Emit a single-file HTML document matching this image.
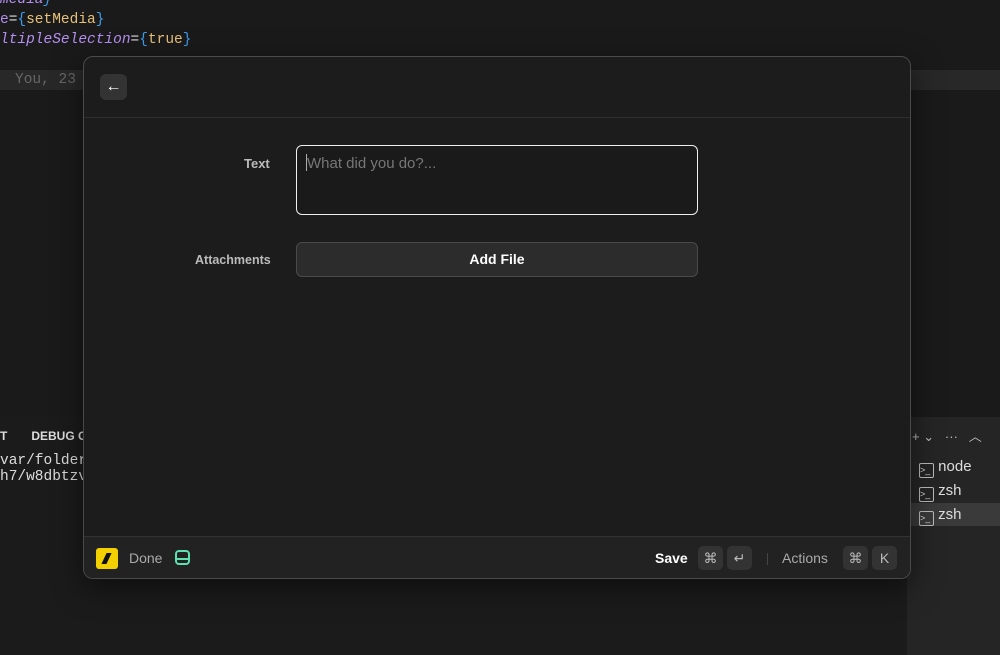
<!DOCTYPE html>
<html><head><meta charset="utf-8"><style>
*{margin:0;padding:0;box-sizing:border-box}
body{width:1000px;height:655px;background:#1a1a1a;position:relative;overflow:hidden;font-family:"Liberation Sans",sans-serif}
.code{position:absolute;left:0;font-family:"Liberation Mono",monospace;font-size:14.5px;color:#b48ef0;white-space:pre}
.a{position:absolute}
.modal{position:absolute;left:83px;top:56px;width:828px;height:523px;background:#1c1c1c;border:1px solid #4a4a4a;border-radius:10px;overflow:hidden;box-shadow:0 8px 30px rgba(0,0,0,.5)}
.kbd{position:absolute;top:9px;width:25px;height:24px;background:#333;border-radius:5px;color:#bbb;font-size:14px;text-align:center;line-height:24px}
</style></head><body>
<div class="code" style="top:-8px;font-style:italic">media<span style="color:#3d9be9">}</span></div>
<div class="code" style="top:12px">e<span style="color:#ddd">=</span><span style="color:#3d9be9">{</span><span style="color:#e6c07b">setMedia</span><span style="color:#3d9be9">}</span></div>
<div class="code" style="top:32px"><i>ltipleSelection</i><span style="color:#ddd">=</span><span style="color:#3d9be9">{</span><span style="color:#e6c07b">true</span><span style="color:#3d9be9">}</span></div>
<div class="a" style="left:0;top:70px;width:1000px;height:20px;background:#282828"></div>
<div class="code" style="top:72px;left:15px;color:#666">You, 23 h</div>
<div class="a" style="left:0;top:417px;width:1000px;height:238px;background:#1b1b1b"></div>
<div class="a" style="left:907px;top:417px;width:93px;height:238px;background:#252525"></div>
<div class="a" style="left:0;top:429px;color:#ddd;font-size:12px;font-weight:bold">T<span style="margin-left:24px">DEBUG C</span></div>
<div class="code" style="top:453px;color:#ddd">var/folders</div>
<div class="code" style="top:469px;color:#ddd">h7/w8dbtzvd</div>
<div class="a" style="left:912px;top:426px;color:#bbb;font-size:13px">+ ⌄ &nbsp; ··· &nbsp; ︿</div>
<div class="a" style="left:907px;top:503px;width:93px;height:23px;background:#3a3a3a"></div>
<div class="a" style="left:919px;top:455px;color:#ddd;font-size:15px;line-height:24px">
<div><span style="display:inline-block;width:15px;height:15px;border:1px solid #bbb;border-radius:2px;font-size:9px;vertical-align:-2px;line-height:13px">&gt;_</span> node</div>
<div><span style="display:inline-block;width:15px;height:15px;border:1px solid #bbb;border-radius:2px;font-size:9px;vertical-align:-2px;line-height:13px">&gt;_</span> zsh</div>
<div><span style="display:inline-block;width:15px;height:15px;border:1px solid #bbb;border-radius:2px;font-size:9px;vertical-align:-2px;line-height:13px">&gt;_</span> zsh</div>
</div>
<div class="modal">
 <div class="a" style="left:16px;top:17px;width:27px;height:26px;background:#333;border-radius:6px;color:#fff;font-size:16px;text-align:center;line-height:25px;font-weight:bold">←</div>
 <div class="a" style="left:0;top:60px;width:100%;height:1px;background:#2e2e2e"></div>
 <div class="a" style="left:160px;top:99px;color:#bbb;font-size:13px;font-weight:bold">Text</div>
 <div class="a" style="left:212px;top:88px;width:402px;height:70px;border:1.5px solid #eee;border-radius:6px;background:#1a1a1a"></div>
 <div class="a" style="left:222px;top:97px;width:1px;height:17px;background:#aaa"></div>
 <div class="a" style="left:223px;top:98px;color:#777;font-size:15px">What did you do?...</div>
 <div class="a" style="left:111px;top:196px;color:#bbb;font-size:12.5px;font-weight:bold">Attachments</div>
 <div class="a" style="left:212px;top:185px;width:402px;height:35px;border:1px solid #4a4a4a;border-radius:6px;background:#2c2c2c;color:#fff;font-size:14px;font-weight:bold;text-align:center;line-height:33px">Add File</div>
 <div class="a" style="left:0;top:479px;width:100%;height:44px;background:#222;border-top:1px solid #333">
  <div class="a" style="left:12px;top:11px;width:22px;height:21px;background:#f5d000;border-radius:3px"><div style="position:absolute;left:8px;top:5px;width:5px;height:11px;background:#111;transform:skewX(-25deg)"></div></div>
  <div class="a" style="left:45px;top:13px;color:#aaa;font-size:14px">Done</div>
  <div class="a" style="left:91px;top:13px;width:15px;height:15px;border:2px solid #5ee0b0;border-radius:4px"><div style="position:absolute;left:0;right:0;top:6px;height:2px;background:#5ee0b0"></div></div>
  <div class="a" style="left:571px;top:13px;color:#fff;font-size:14px;font-weight:bold">Save</div>
  <div class="kbd" style="left:614px">⌘</div>
  <div class="kbd" style="left:643px">↵</div>
  <div class="a" style="left:683px;top:16px;width:1px;height:12px;background:#444"></div>
  <div class="a" style="left:698px;top:13px;color:#aaa;font-size:14px">Actions</div>
  <div class="kbd" style="left:759px">⌘</div>
  <div class="kbd" style="left:788px">K</div>
 </div>
</div>
</body></html>
